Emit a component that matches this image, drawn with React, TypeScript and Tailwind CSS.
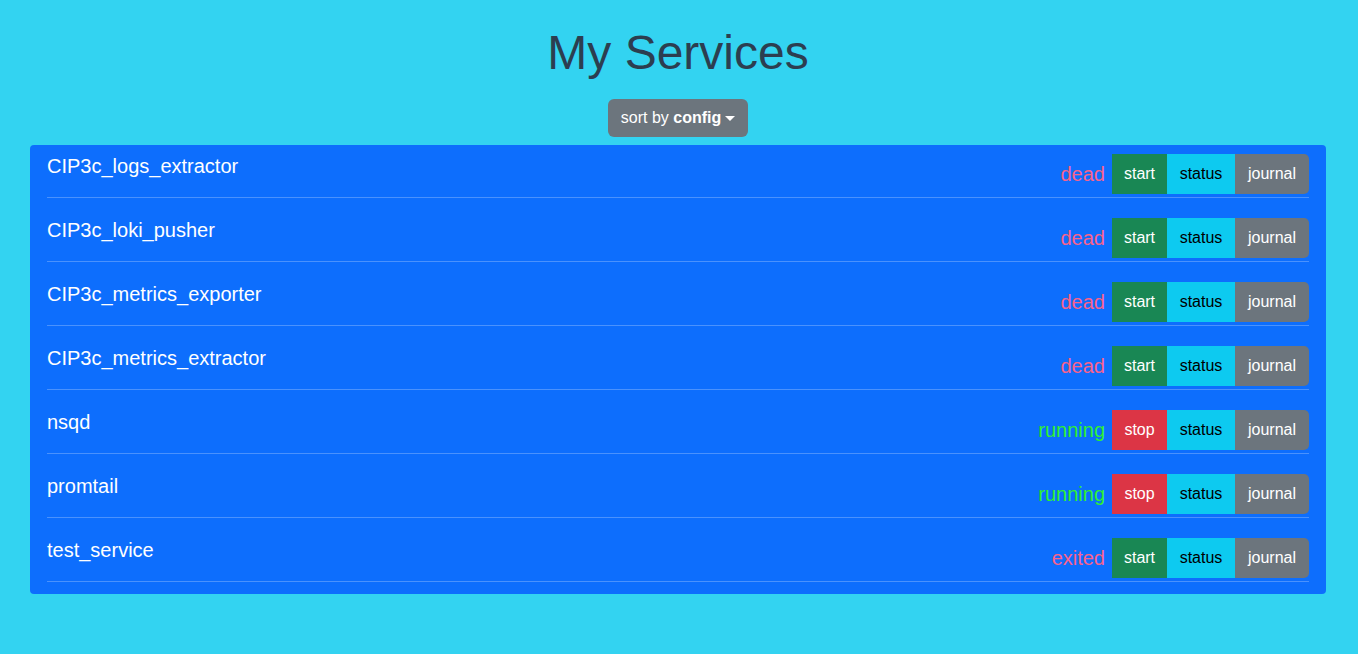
const SERVICES = [
  { name: "CIP3c_logs_extractor", state: "dead" },
  { name: "CIP3c_loki_pusher", state: "dead" },
  { name: "CIP3c_metrics_exporter", state: "dead" },
  { name: "CIP3c_metrics_extractor", state: "dead" },
  { name: "nsqd", state: "running" },
  { name: "promtail", state: "running" },
  { name: "test_service", state: "exited" },
];

function ServiceRow({ name, state }: { name: string; state: string }) {
  const running = state === "running";
  return (
    <div className="flex items-start justify-between border-b border-[#4a92fd] pt-[20px] pb-[3px] first:pt-[9px]">
      <div className="text-[20px] leading-[24px] text-white">{name}</div>
      <div className="flex h-[40px] items-center">
        <span
          className={`mr-[7px] text-[20px] leading-[24px] ${
            running ? "text-[#30f030]" : "text-[#fa628c]"
          }`}
        >
          {state}
        </span>
        <div className="flex h-[40px] text-[16px] leading-[24px]">
          {running ? (
            <button className="w-[55px] bg-[#dc3545] text-white">stop</button>
          ) : (
            <button className="w-[55px] bg-[#198754] text-white">start</button>
          )}
          <button className="w-[68px] bg-[#0dcaf0] text-black">status</button>
          <button className="w-[74px] rounded-r-[5px] bg-[#6c757d] text-white">journal</button>
        </div>
      </div>
    </div>
  );
}

export default function App() {
  return (
    <div className="min-h-[654px] bg-[#33d3f1] font-['Liberation_Sans',Arial,sans-serif]">
      <div className="flex flex-col items-center pr-[2px]">
        <h1 className="mt-[24px] text-[48px] leading-[58px] text-[#2c3e50]">My Services</h1>
        <button className="mt-[17px] flex h-[38px] w-[140px] items-center justify-center rounded-[6px] bg-[#6c757d] text-[16px] text-white">
          sort by&nbsp;<b>config</b>
          <span className="ml-[4px] mt-[1px] h-0 w-0 border-x-[5px] border-t-[5px] border-x-transparent border-t-white" />
        </button>
      </div>
      <div className="ml-[30px] mt-[8px] w-[1296px] rounded-[4px] bg-[#0d6efd] px-[17px] pb-[12px]">
        {SERVICES.map((s) => (
          <ServiceRow key={s.name} name={s.name} state={s.state} />
        ))}
      </div>
    </div>
  );
}
